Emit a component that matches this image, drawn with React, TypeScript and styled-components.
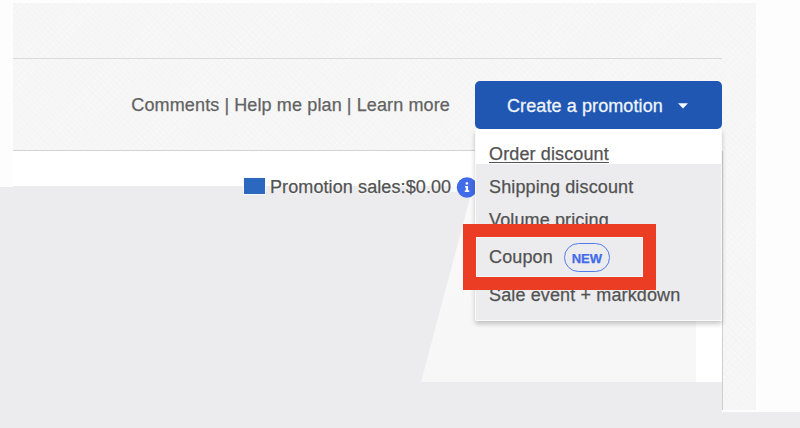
import React from "react";
import styled, { createGlobalStyle } from "styled-components";

const Global = createGlobalStyle`
  * { box-sizing: border-box; }
  html, body { margin: 0; padding: 0; background: #fdfdfd; }
`;

const Page = styled.div`
  width: 800px;
  height: 428px;
  position: relative;
  display: flex;
  flex-direction: column;
  overflow: hidden;
  padding-top: 3px;
  background: #fdfdfd;
  font: 18px/20px "Liberation Sans", Arial, sans-serif;
  letter-spacing: 0.13px;
  color: #5a5a5a;
  -webkit-text-stroke: 0.25px currentColor;
  white-space: nowrap;
`;

const Shade = styled.div`
  position: absolute;
  inset: 0;
  background: #ececee;
  clip-path: polygon(0 187px, 13px 187px, 13px 186px, 450px 186px, 450px 192px, 472px 192px, 470px 198px, 421px 382px, 722px 382px, 722px 412px, 800px 412px, 800px 428px, 0 428px);
`;

const Frame = styled.main`
  width: 743px;
  height: 407px;
  margin-left: 13px;
  padding-right: 34px;
  background-color: #f6f6f6;
  background-image: repeating-linear-gradient(45deg, #f4f4f4 0 1px, transparent 1px 4px),
    repeating-linear-gradient(-45deg, #f8f8f8 0 1px, transparent 1px 5px);
`;

const Strip = styled.div`
  height: 56px;
  border-bottom: 1px solid #dadada;
`;

const Header = styled.header`
  height: 92px;
  display: flex;
  justify-content: flex-end;
  align-items: flex-start;
  padding-top: 22px;
  border-bottom: 1px solid #d2d2d2;
`;

const Links = styled.nav`
  display: flex;
  gap: 5px;
  margin: 14px 25px 0 0;
  color: #626262;
`;

const Action = styled.div`
  position: relative;
  width: 247px;
  z-index: 2;
`;

const Button = styled.button`
  width: 247px;
  height: 48px;
  display: flex;
  align-items: center;
  gap: 14px;
  padding: 2px 0 0 32px;
  border: 0;
  border-radius: 5px;
  background: #1f57b3;
  color: #f0f4fc;
  font: inherit;
  letter-spacing: 0.1px;
  -webkit-text-stroke: 0.3px #f0f4fc;
`;

const Menu = styled.ul`
  position: absolute;
  top: 48px;
  left: 0;
  width: 247px;
  height: 192px;
  margin: 0;
  padding: 15px 0 0 13px;
  list-style: none;
  color: #525252;
  background: linear-gradient(#ffffff 35px, #ececee 35px);
  border: solid #f9f9fa;
  border-width: 0 1px 1px;
  border-radius: 0 0 2px 2px;
  box-shadow: 0 3px 5px rgba(0, 0, 0, 0.22);
`;

const Item = styled.li<{ $height: number; $underlined?: boolean }>`
  height: ${(p) => p.$height}px;
  display: flex;
  align-items: flex-start;
  gap: 11px;
  text-decoration: ${(p) => (p.$underlined ? "underline" : "none")};
  text-decoration-thickness: 1px;
  text-underline-offset: 2px;
`;

const Badge = styled.span`
  width: 46px;
  height: 29px;
  margin-top: -4px;
  display: flex;
  align-items: center;
  justify-content: center;
  border: 1px solid #527aeb;
  border-radius: 15px;
  color: #416be9;
  font-size: 13px;
  font-weight: 700;
  letter-spacing: 0;
  padding-top: 2px;
`;

const Highlight = styled.div`
  position: absolute;
  left: -12px;
  top: 143px;
  width: 193px;
  height: 66px;
  border: 13px solid #eb3c24;
  box-shadow: inset 0 0 0 1px #f7f7f8;
`;

const Content = styled.section`
  height: 259px;
  display: flex;
  background: linear-gradient(#fafafa, #f6f6f6) 0 0 / 683px 100% no-repeat #ffffff;
  box-shadow: 1px 0 0 #cfcfd1;
`;

const Cover = styled.div`
  width: 709px;
  height: 35px;
  background: #ffffff;
`;

const Legend = styled.div`
  position: absolute;
  left: 244px;
  top: 177px;
  height: 20px;
  display: flex;
  align-items: center;
  color: #525252;
`;

const Swatch = styled.span`
  width: 21px;
  height: 16px;
  margin-right: 5px;
  margin-bottom: 2px;
  background: #2d68c0;
  outline: 1px solid #f7f8fb;
`;

const Amount = styled.span`
  margin-right: 5px;
  letter-spacing: 0.1px;
  text-shadow: 0 0 2px #ffffff, 0 1px 1px #ffffff;
`;

export default function App() {
  return (
    <Page>
      <Global />
      <Frame>
        <Strip />
        <Header>
          <Links>
            <span>Comments</span>
            <span>|</span>
            <span>Help me plan</span>
            <span>|</span>
            <span>Learn more</span>
          </Links>
          <Action>
            <Button>
              Create a promotion
              <svg width="12" height="6" viewBox="0 0 12 6">
                <path d="M1 0.3H11L6 5.5Z" fill="#f5f8ff" />
              </svg>
            </Button>
            <Menu>
              <Item $height={33} $underlined>Order discount</Item>
              <Item $height={33}>Shipping discount</Item>
              <Item $height={37}>Volume pricing</Item>
              <Item $height={38}>
                Coupon
                <Badge>NEW</Badge>
              </Item>
              <Item $height={24}>Sale event + markdown</Item>
            </Menu>
            <Highlight />
          </Action>
        </Header>
        <Content>
          <Cover />
        </Content>
      </Frame>
      <Shade />
      <Legend>
        <Swatch />
        <Amount>Promotion sales:$0.00</Amount>
        <svg width="22" height="22" viewBox="0 0 22 22">
          <circle cx="11" cy="11.5" r="10.2" fill="#416be8" />
          <rect x="9.7" y="6.3" width="2.4" height="2.2" fill="#fff" />
          <path d="M9 10h3.1v4.2H13.2V16H8.8V14.2H9.9V11.6H9Z" fill="#fff" />
        </svg>
      </Legend>
    </Page>
  );
}
